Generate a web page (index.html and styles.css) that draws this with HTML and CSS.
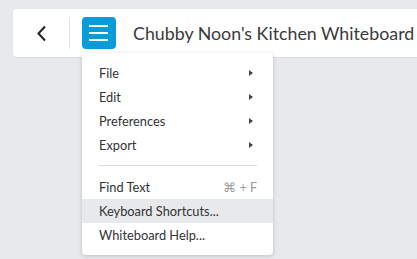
FILE: index.html
```html
<!DOCTYPE html>
<html>
<head>
<meta charset="utf-8">
<link rel="stylesheet" href="styles.css">
</head>
<body>
<div class="page">
  <header class="bar">
    <button class="back" aria-label="Back">
      <svg width="11" height="17" viewBox="0 0 11 17"><path d="M9 1.5 L2.5 8.5 L9 15.5" fill="none" stroke="#222" stroke-width="2"/></svg>
    </button>
    <span class="divider"></span>
    <div class="menu-anchor">
      <button class="hamburger" aria-label="Menu">
        <span></span><span></span><span></span>
      </button>
      <div class="menu">
        <div class="item"><span>File</span><span class="arrow"></span></div>
        <div class="item"><span>Edit</span><span class="arrow"></span></div>
        <div class="item"><span>Preferences</span><span class="arrow"></span></div>
        <div class="item"><span>Export</span><span class="arrow"></span></div>
        <div class="sep"></div>
        <div class="item"><span>Find Text</span><span class="key">⌘ + F</span></div>
        <div class="item active"><span>Keyboard Shortcuts...</span></div>
        <div class="item"><span>Whiteboard Help...</span></div>
      </div>
    </div>
    <h1 class="title">Chubby Noon's Kitchen Whiteboard</h1>
  </header>
</div>
</body>
</html>
```
FILE: styles.css
```css
html, body {
  margin: 0;
  padding: 0;
  background: #e8e9eb;
  font-family: Lato, "Open Sans", sans-serif;
  overflow: hidden;
}
.page {
  padding: 9px 0 0 13px;
  width: 417px;
  height: 259px;
  box-sizing: border-box;
  overflow: hidden;
}
.bar {
  display: flex;
  align-items: center;
  height: 48px;
  width: 420px;
  background: #fff;
  border-radius: 4px;
  box-shadow: 0 1px 2px rgba(0,0,0,0.06);
}
.back {
  border: 0;
  background: none;
  padding: 0;
  margin-left: 23px;
  width: 11px;
  height: 17px;
  display: flex;
}
.divider {
  width: 1px;
  height: 32px;
  background: #e4e4e4;
  margin-left: 22px;
}
.menu-anchor {
  position: relative;
  margin-left: 12px;
  height: 32px;
}
.hamburger {
  width: 34px;
  height: 32px;
  border: 0;
  border-radius: 4px;
  background: #0a9bd9;
  padding: 8px 8px 0 7px;
  display: flex;
  flex-direction: column;
  gap: 5.5px;
  box-sizing: border-box;
}
.hamburger span {
  display: block;
  width: 19px;
  height: 1.5px;
  background: #fff;
}
.title {
  margin: 0 0 0 17px;
  font-size: 17.8px;
  font-weight: 400;
  color: #3a3a3a;
  white-space: nowrap;
}
.menu {
  position: absolute;
  left: 0;
  top: 36px;
  width: 191px;
  background: #fff;
  border-radius: 4px;
  box-shadow: 0 1px 4px rgba(0,0,0,0.18);
  padding: 8px 0;
  z-index: 2;
}
.item {
  height: 24px;
  display: flex;
  align-items: center;
  justify-content: space-between;
  padding: 0 16px 0 17px;
  font-size: 12.8px;
  color: #333;
}
.item.active {
  background: #e8e9eb;
}
.arrow {
  width: 0;
  height: 0;
  border-left: 4px solid #444;
  border-top: 3.5px solid transparent;
  border-bottom: 3.5px solid transparent;
  margin-right: 4px;
}
.key {
  color: #9a9a9a;
  font-size: 12.5px;
}
.sep {
  height: 1px;
  background: #dcdcdc;
  margin: 8px 16px 9px 17px;
}
```
